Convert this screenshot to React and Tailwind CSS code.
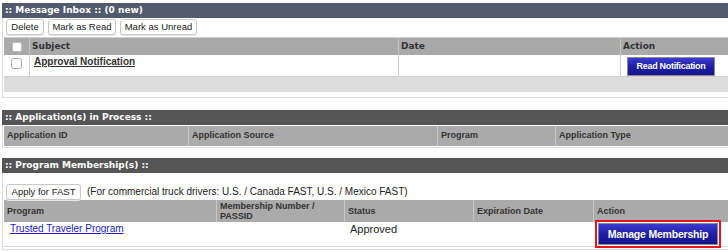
import React from "react";

const V = { fontFamily: '"DejaVu Sans", Verdana, sans-serif' };
const A = { fontFamily: '"Liberation Sans", Arial, Helvetica, sans-serif' };

function Bar({ title, blue }) {
  return (
    <div
      className={`h-[15px] flex items-center pl-[3px] text-white font-bold text-[9px] ${blue ? "bg-[#525a6e]" : "bg-[#555555]"}`}
      style={V}
    >
      {title}
    </div>
  );
}

function WhiteBtn({ children, className }) {
  return (
    <button
      className={`h-[16px] rounded-[3px] border border-[#c8c8c8] bg-white text-[9.5px] text-[#222] leading-none shadow-[0_1px_0_#e6e6e6] flex items-center justify-center ${className}`}
      style={A}
    >
      {children}
    </button>
  );
}

function BlueBtn({ children, className }) {
  return (
    <button
      className={`border border-[#8a8a9a] bg-gradient-to-b from-[#3b3bd0] via-[#1f1fa8] to-[#14148a] text-white font-bold leading-none flex items-center justify-center ${className}`}
      style={A}
    >
      {children}
    </button>
  );
}

export default function App() {
  return (
    <div className="w-[728px] h-[252px] bg-white overflow-hidden pt-[3px] pl-[2px]">
      {/* Message Inbox */}
      <Bar title=":: Message Inbox :: (0 new)" blue />
      <div className="border-l border-b border-[#dcdcdc] pb-[5px]">
        <div className="flex gap-[4px] pl-[3px] pt-[1px] h-[19px]">
          <WhiteBtn className="w-[38px]">Delete</WhiteBtn>
          <WhiteBtn className="w-[68px]">Mark as Read</WhiteBtn>
          <WhiteBtn className="w-[77px]">Mark as Unread</WhiteBtn>
        </div>
        <div className="ml-[1px] border-t border-[#d0d0d0]">
          <div
            className="grid grid-cols-[26px_369px_222px_1fr] h-[17px] bg-[#a9a9a9] text-[9px] font-bold text-[#333]"
            style={V}
          >
            <div className="flex items-center justify-center border-r border-[#c4c4c4]">
              <span className="w-[10px] h-[10px] bg-white rounded-[2px] border border-[#bbb]" />
            </div>
            <div className="flex items-center pl-[2px] border-r border-[#c4c4c4]">Subject</div>
            <div className="flex items-center pl-[2px] border-r border-[#c4c4c4]">Date</div>
            <div className="flex items-center pl-[2px]">Action</div>
          </div>
          <div className="grid grid-cols-[26px_369px_222px_1fr] h-[22px] bg-white border-b border-[#d0d0d0]">
            <div className="flex justify-center pt-[3px] border-r border-[#d0d0d0]">
              <span className="w-[11px] h-[11px] bg-white rounded-[3px] border border-[#a8a8a8]" />
            </div>
            <div
              className="pl-[4px] leading-[14px] border-r border-[#d0d0d0] text-[10px] font-bold text-[#333] underline"
              style={A}
            >
              Approval Notification
            </div>
            <div className="border-r border-[#d0d0d0]" />
            <div className="pl-[6px] pt-[2px]">
              <BlueBtn className="h-[19px] w-[88px] text-[9px] tracking-[-0.3px]">Read Notification</BlueBtn>
            </div>
          </div>
          <div className="h-[15px] bg-[#dcdcdc]" />
        </div>
      </div>

      {/* Application(s) in Process */}
      <div className="mt-[12px]">
        <Bar title=":: Application(s) in Process ::" />
        <div className="border-l border-b border-[#dcdcdc] pt-[1px] pb-[1px]">
          <div
            className="grid grid-cols-[185px_249px_118px_1fr] h-[20px] ml-[1px] bg-[#aaaaaa] text-[9px] font-bold text-[#333]"
            style={A}
          >
            <div className="flex items-center pl-[3px] border-r border-[#c8c8c8]">Application ID</div>
            <div className="flex items-center pl-[3px] border-r border-[#c8c8c8]">Application Source</div>
            <div className="flex items-center pl-[3px] border-r border-[#c8c8c8]">Program</div>
            <div className="flex items-center pl-[3px]">Application Type</div>
          </div>
        </div>
      </div>

      {/* Program Membership(s) */}
      <div className="mt-[10px]">
        <Bar title=":: Program Membership(s) ::" />
        <div className="border-l border-b border-[#dcdcdc] pb-[2px]">
          <div className="flex items-center gap-[6px] pl-[3px] pt-[11px] pb-[1px] h-[27px]">
            <WhiteBtn className="w-[75px] h-[15px]">Apply for FAST</WhiteBtn>
            <span className="text-[10px] leading-[15px] text-[#222]" style={A}>
              (For commercial truck drivers: U.S. / Canada FAST, U.S. / Mexico FAST)
            </span>
          </div>
          <div
            className="grid grid-cols-[213px_128px_129px_120px_1fr] h-[22px] ml-[1px] bg-[#aaaaaa] text-[9px] font-bold text-[#333] leading-[10px]"
            style={A}
          >
            <div className="flex items-center pl-[3px] border-r border-[#c8c8c8]">Program</div>
            <div className="flex items-center pl-[3px] border-r border-[#c8c8c8]">
              Membership Number /<br />PASSID
            </div>
            <div className="flex items-center pl-[3px] border-r border-[#c8c8c8]">Status</div>
            <div className="flex items-center pl-[3px] border-r border-[#c8c8c8]">Expiration Date</div>
            <div className="flex items-center pl-[3px]">Action</div>
          </div>
          <div className="grid grid-cols-[213px_128px_129px_120px_1fr] h-[25px] ml-[1px] border-b border-[#d8d8d8]">
            <div className="pl-[6px] leading-[14px] text-[10px] text-[#1a1acc] underline" style={A}>
              Trusted Traveler Program
            </div>
            <div />
            <div className="pl-[5px] leading-[14px] text-[11px] text-[#222]" style={A}>
              Approved
            </div>
            <div />
            <div className="pl-[1px]">
              <div className="w-[126px] h-[28px] -mt-[2px] border-2 border-[#e8141b] p-[1px] flex">
                <BlueBtn className="flex-1 text-[10.5px] tracking-[-0.2px]">Manage Membership</BlueBtn>
              </div>
            </div>
          </div>
        </div>
      </div>
    </div>
  );
}
